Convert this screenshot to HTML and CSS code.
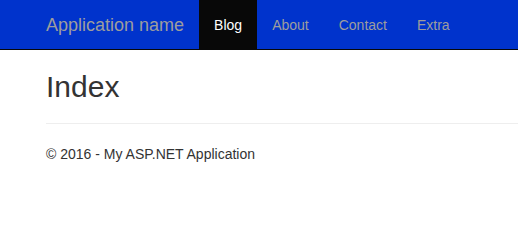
FILE: index.html
```html
<!DOCTYPE html>
<html lang="en">
<head>
    <meta charset="UTF-8">
    <meta name="viewport" content="width=device-width, initial-scale=1.0">
    <title>Index - My ASP.NET Application</title>
    <link rel="stylesheet" href="styles.css">
</head>
<body>
    <div class="navbar">
        <div class="navbar-inner">
            <a class="navbar-brand" href="#">Application name</a>
            <ul class="nav">
                <li class="active"><a href="#">Blog</a></li>
                <li><a href="#">About</a></li>
                <li><a href="#">Contact</a></li>
                <li><a href="#">Extra</a></li>
            </ul>
        </div>
    </div>
    <div class="body-content">
        <h2>Index</h2>
        <hr />
        <footer>
            <p>&copy; 2016 - My ASP.NET Application</p>
        </footer>
    </div>
</body>
</html>
```

FILE: styles.css
```css
* {
    box-sizing: border-box;
}
body {
    margin: 0;
    font-family: "Liberation Sans", Arial, sans-serif;
    font-size: 14px;
    line-height: 20px;
    color: #333;
    background: #fff;
}
.navbar {
    height: 50px;
    background-color: #0033cc;
    border-bottom: 1px solid #080808;
}
.navbar-inner {
    display: flex;
    height: 49px;
    padding-left: 31px;
}
.navbar-brand {
    padding: 15px;
    font-size: 18px;
    line-height: 20px;
    color: #9d9d9d;
    text-decoration: none;
}
.nav {
    display: flex;
    list-style: none;
    margin: 0;
    padding: 0;
}
.nav li a {
    display: block;
    height: 49px;
    padding: 15px;
    color: #9d9d9d;
    text-decoration: none;
}
.nav li.active a {
    color: #fff;
    background-color: #080808;
}
.body-content {
    padding-left: 46px;
}
h2 {
    margin: 20px 0 10px;
    font-size: 30px;
    font-weight: 500;
    line-height: 1.1;
}
hr {
    margin: 20px 0;
    border: 0;
    border-top: 1px solid #eee;
}
footer p {
    margin: 0 0 10px;
}
```
